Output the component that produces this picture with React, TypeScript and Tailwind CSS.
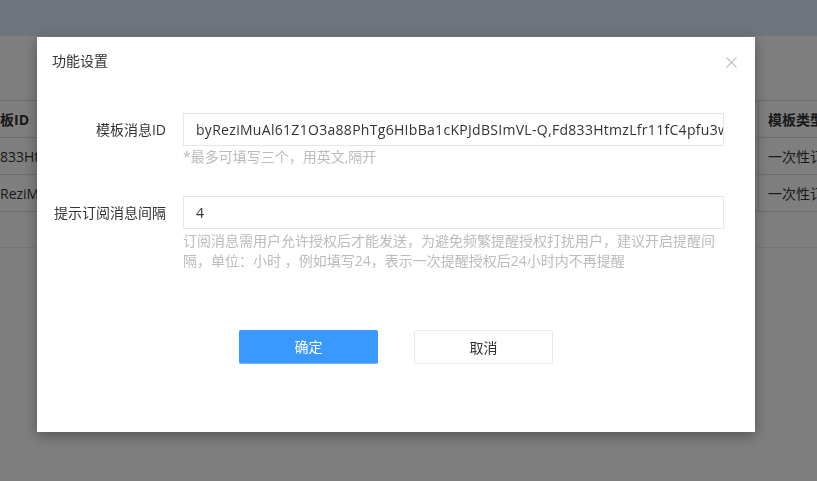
import React from 'react'

const font = { fontFamily: '"Open Sans", "Noto Sans CJK SC", sans-serif' }

function TableRow({ first, last, head }: { first: string; last: string; head?: boolean }) {
  return (
    <div className={`flex border-b border-[#dcdcdc] ${head ? 'h-[38px] border-t' : 'h-[37px]'}`}>
      <div className={`w-[140px] flex items-center whitespace-nowrap overflow-hidden text-[14px] text-[#333] ${head ? 'font-bold' : ''}`}>
        {first}
      </div>
      <div className="flex-1" />
      <div className={`w-[59px] flex items-center pl-[9px] border-l border-[#dcdcdc] whitespace-nowrap overflow-hidden text-[14px] text-[#333] ${head ? 'font-bold' : ''}`}>
        {last}
      </div>
    </div>
  )
}

export default function App() {
  return (
    <div className="relative w-full h-[481px] overflow-hidden bg-white" style={font}>
      {/* page behind the dialog */}
      <div className="h-[36px] bg-[#dceafa]" />
      <div className="pt-[64px]">
        <TableRow head first="板ID" last="模板类型" />
        <TableRow first="833HtmzLfr11fC4pfu3" last="一次性订阅" />
        <TableRow first="ReziMuAl61Z1O3a88" last="一次性订阅" />
        <div className="h-[36px] border-b border-[#e4f1f4]" />
      </div>

      {/* overlay */}
      <div className="fixed inset-0 bg-black/50" />

      {/* dialog */}
      <div className="fixed left-[37px] top-[37px] w-[718px] h-[395px] bg-white shadow-[0_4px_14px_rgba(0,0,0,0.35)]">
        <div className="relative px-[15px] pt-[14px]">
          <div className="text-[14px] leading-[20px] text-[#333]">功能设置</div>
          <button className="absolute right-[18px] top-[20px] w-[11px] h-[11px]">
            <svg viewBox="0 0 11 11" className="w-[11px] h-[11px]">
              <path d="M0.5 0.5L10.5 10.5M10.5 0.5L0.5 10.5" stroke="#c4c4c4" strokeWidth="1.3" fill="none" />
            </svg>
          </button>
        </div>

        <div className="mt-[42px] flex flex-col gap-[29px]">
          <div className="flex">
            <div className="w-[129px] h-[33px] flex items-center justify-end text-[14px] text-[#333]">模板消息ID</div>
            <div className="ml-[17px] w-[541px]">
              <div className="h-[33px] border border-[#e6e6e6] pl-[12px] pr-[3px] flex items-center overflow-hidden whitespace-nowrap text-[14px] tracking-[0.3px] text-[#333]">
                byReziMuAl61Z1O3a88PhTg6HIbBa1cKPJdBSImVL-Q,Fd833HtmzLfr11fC4pfu3wq8aXk
              </div>
              <div className="mt-px text-[14px] leading-[20px] text-[#bbb]">*最多可填写三个，用英文,隔开</div>
            </div>
          </div>

          <div className="flex">
            <div className="w-[129px] h-[33px] flex items-center justify-end text-[14px] text-[#333]">提示订阅消息间隔</div>
            <div className="ml-[17px] w-[541px]">
              <div className="h-[33px] border border-[#e6e6e6] pl-[12px] flex items-center text-[14px] text-[#333]">4</div>
              <div className="mt-[2px] text-[14px] leading-[20px] text-[#bbb]">
                订阅消息需用户允许授权后才能发送，为避免频繁提醒授权打扰用户，建议开启提醒间隔，单位：小时 ，例如填写24，表示一次提醒授权后24小时内不再提醒
              </div>
            </div>
          </div>
        </div>

        <div className="mt-[59px] flex justify-center gap-[36px]">
          <button className="w-[139px] h-[34px] rounded-[2px] bg-[#3a99ff] border-b border-[#74b6ff] text-white text-[14px]">确定</button>
          <button className="w-[139px] h-[34px] rounded-[2px] bg-white border border-[#e8e8e8] text-[#333] text-[14px]">取消</button>
        </div>
      </div>
    </div>
  )
}
